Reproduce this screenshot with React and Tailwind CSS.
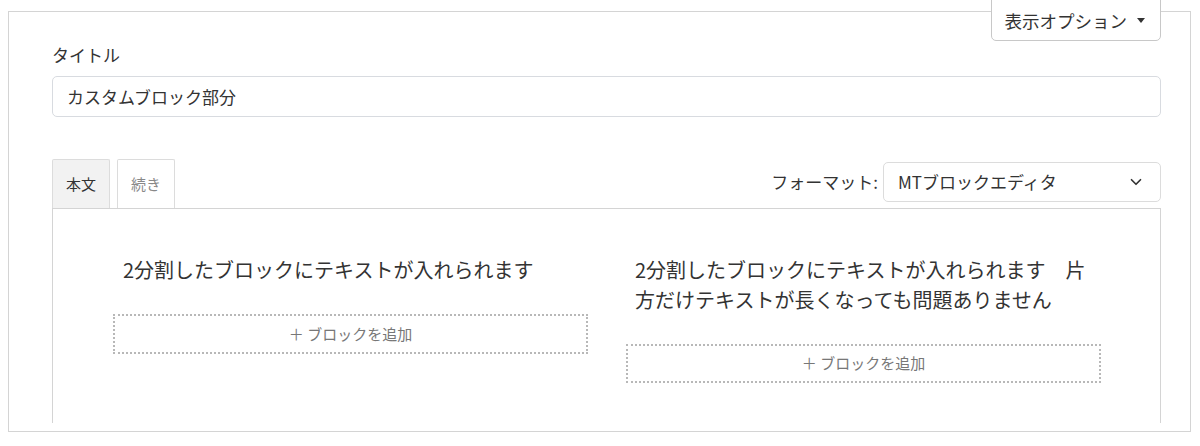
import React from "react";
import { ChevronDown } from "lucide-react";

export default function App() {
  return (
    <div className="w-[1200px] h-[446px] bg-white pt-[11px] px-[8px] font-['Noto_Sans_CJK_JP','Noto_Sans',sans-serif] text-[#333]">
      <div className="relative h-[421px] w-[1183px] border border-[#d4d4d4] pl-[43px] pr-[29px]">
        {/* display options button */}
        <button className="absolute right-[29px] top-[-22px] h-[51px] flex items-end pb-[7px] pl-[13px] pr-[15px] gap-[10px] bg-white border border-[#c8c8c8] rounded-[5px] text-[17.5px] leading-[24px] text-[#333]">
          <span>表示オプション</span>
          <span className="mb-[10px] w-0 h-0 border-x-[4px] border-x-transparent border-t-[5px] border-t-[#333]" />
        </button>

        <div className="pt-[31px] text-[17px] leading-[24px]">タイトル</div>
        <div className="mt-[9px] h-[41px] flex items-center rounded-[5px] border border-[#d8dbe0] px-[14px] text-[17px]">
          カスタムブロック部分
        </div>

        <div className="mt-[42px] flex items-end justify-between">
          <div className="flex gap-[7px]">
            <div className="w-[58px] h-[49px] flex items-center justify-center bg-[#f2f2f2] border border-b-0 border-[#dcdcdc] rounded-t-[2px] text-[15px] text-[#333]">
              本文
            </div>
            <div className="w-[58px] h-[49px] flex items-center justify-center bg-white border border-b-0 border-[#dcdcdc] rounded-t-[2px] text-[15px] text-[#888]">
              続き
            </div>
          </div>
          <div className="flex items-center gap-[5px] pb-[6px]">
            <span className="text-[17px] leading-[24px]">フォーマット:</span>
            <div className="w-[278px] h-[40px] flex items-center justify-between rounded-[5px] border border-[#dcdcdc] pl-[14px] pr-[15px] text-[17px]">
              <span>MTブロックエディタ</span>
              <ChevronDown size={18} strokeWidth={2.25} className="text-[#333]" />
            </div>
          </div>
        </div>

        <div className="h-[215px] border-x border-t border-[#d4d4d4] pl-[60px] pr-[59px] pt-[46px]">
          <div className="grid grid-cols-2 gap-[38px]">
            <div>
              <p className="pl-[10px] pr-[4px] text-[20px] leading-[30px] text-[#333]">
                2分割したブロックにテキストが入れられます
              </p>
              <div className="mt-[29px] h-[40px] flex items-center justify-center border-2 border-dotted border-[#b8b8b8] text-[15px] text-[#777]">
                ＋ ブロックを追加
              </div>
            </div>
            <div>
              <p className="pl-[9px] pr-[4px] text-[20px] leading-[30px] text-[#333]">
                2分割したブロックにテキストが入れられます　片方だけテキストが長くなっても問題ありません
              </p>
              <div className="mt-[29px] h-[39px] flex items-center justify-center border-2 border-dotted border-[#b8b8b8] text-[15px] text-[#777]">
                ＋ ブロックを追加
              </div>
            </div>
          </div>
        </div>
      </div>
    </div>
  );
}
